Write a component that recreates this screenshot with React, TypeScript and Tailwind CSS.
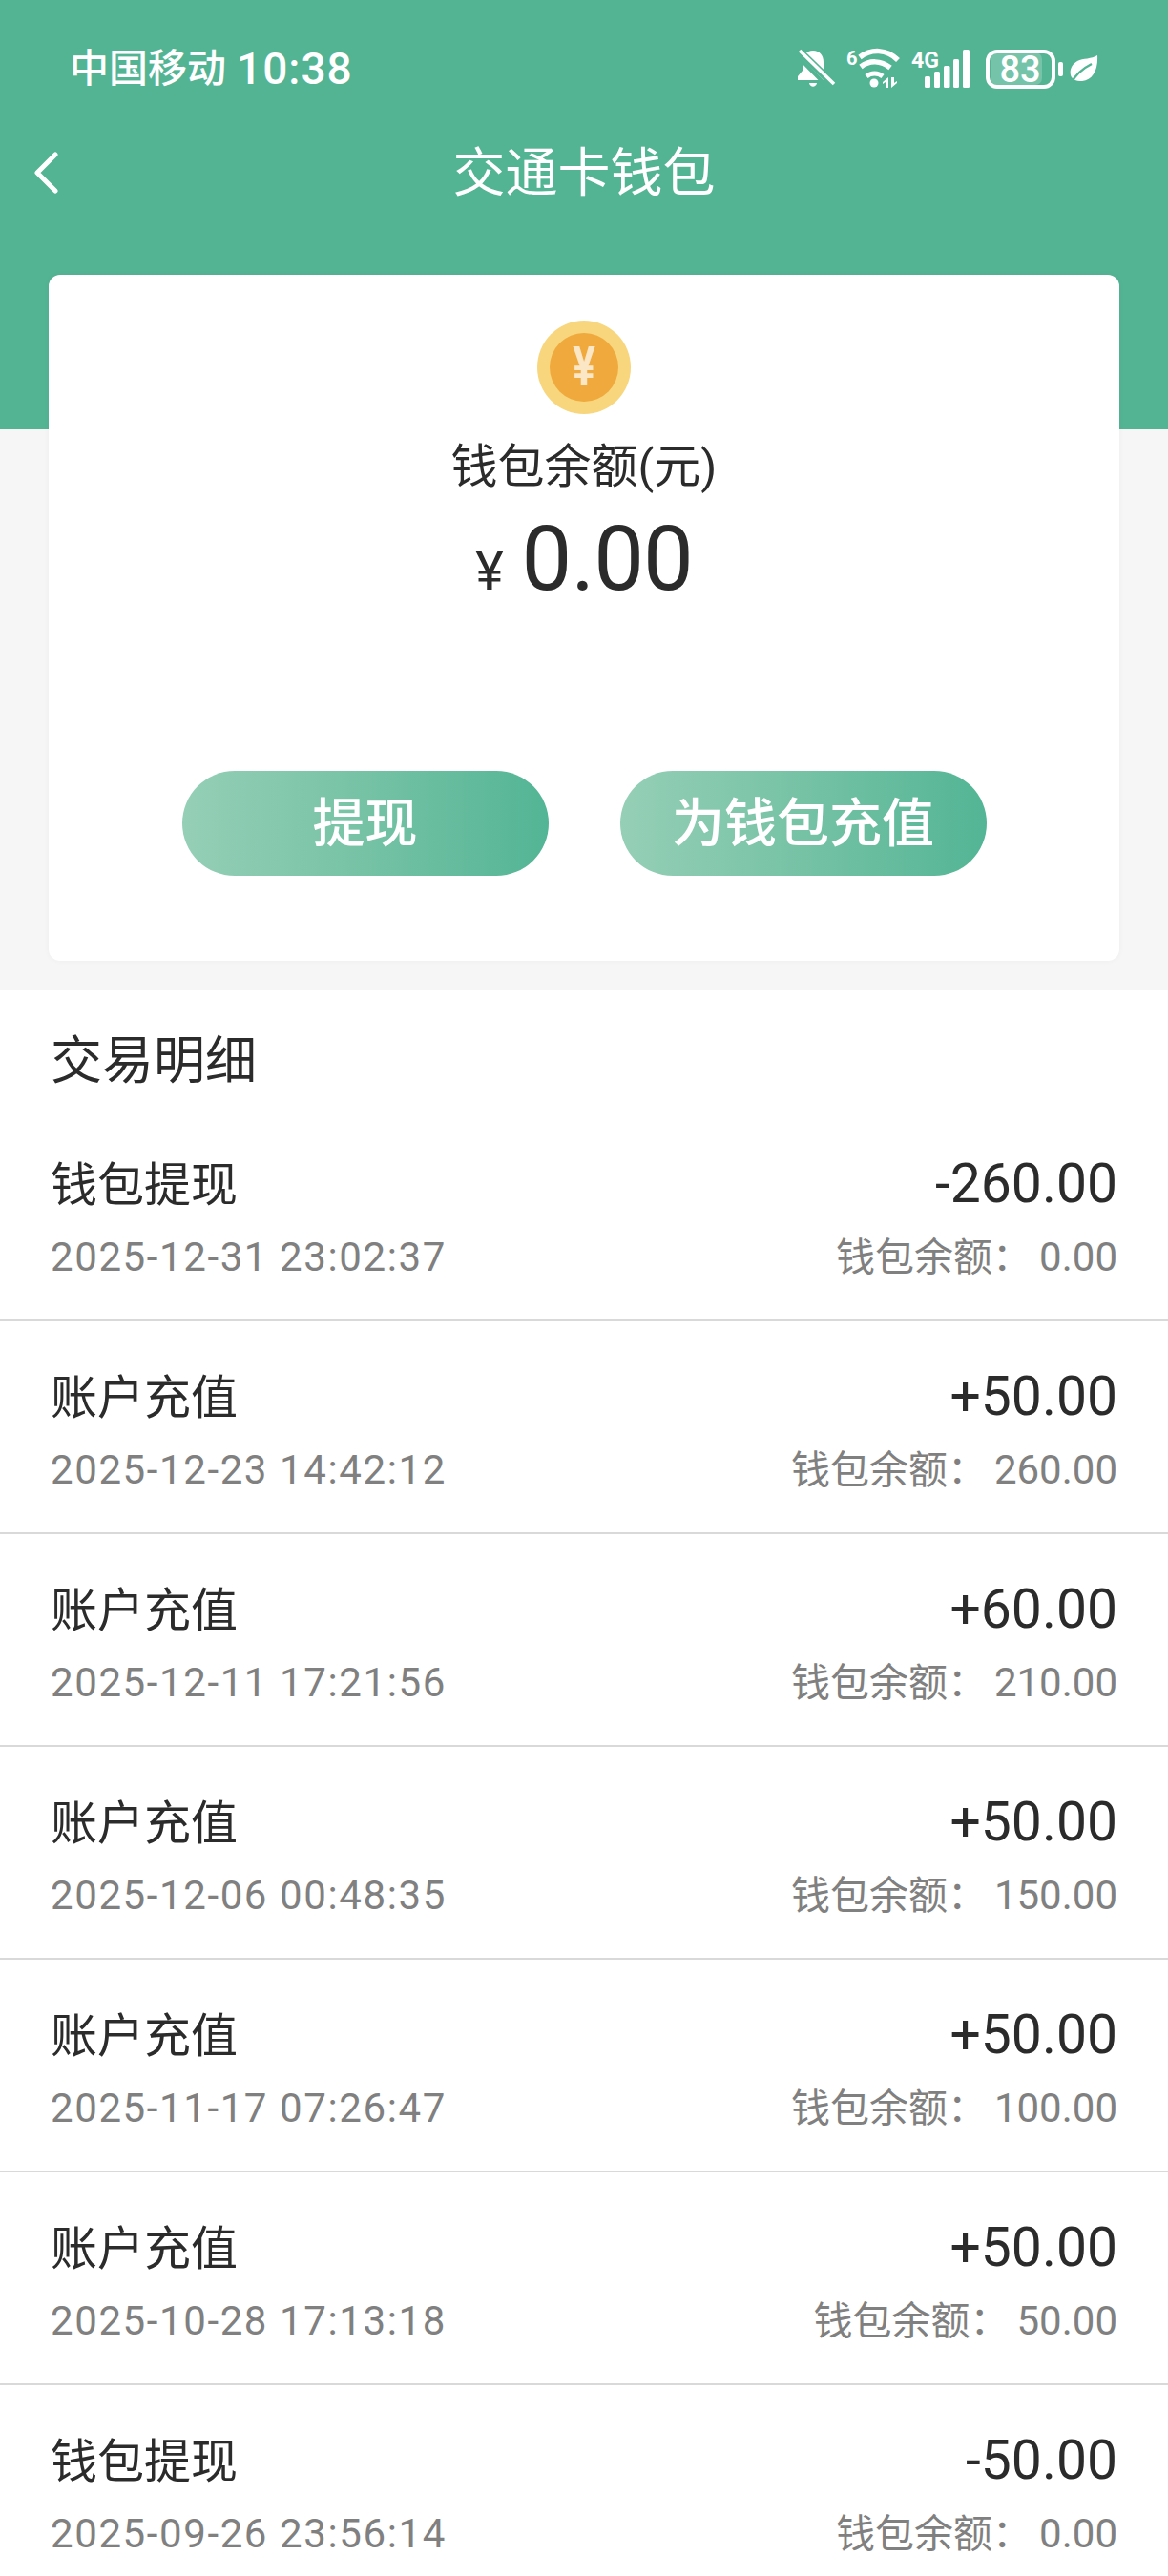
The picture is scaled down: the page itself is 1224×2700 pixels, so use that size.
const FONT = "font-['Roboto','Noto_Sans_CJK_SC',sans-serif]";

const rows = [
  { t: "钱包提现", d: "2025-12-31 23:02:37", a: "-260.00", b: "0.00" },
  { t: "账户充值", d: "2025-12-23 14:42:12", a: "+50.00", b: "260.00" },
  { t: "账户充值", d: "2025-12-11 17:21:56", a: "+60.00", b: "210.00" },
  { t: "账户充值", d: "2025-12-06 00:48:35", a: "+50.00", b: "150.00" },
  { t: "账户充值", d: "2025-11-17 07:26:47", a: "+50.00", b: "100.00" },
  { t: "账户充值", d: "2025-10-28 17:13:18", a: "+50.00", b: "50.00" },
  { t: "钱包提现", d: "2025-09-26 23:56:14", a: "-50.00", b: "0.00" },
];

function StatusIcons() {
  return (
    <div className="flex items-center">
      <svg width="40" height="44" viewBox="0 0 40 44" fill="none">
        <path d="M16 3c-7 0-11 5-11 12v9l-5 6v4h32v-4l-5-6v-9c0-7-4-12-11-12z" fill="#fff" />
        <path d="M12 37h8c-1 5-7 5-8 0z" fill="#fff" />
        <path d="M-3 6 33 43" stroke="#53b494" strokeWidth="4" />
        <path d="M1 3 38 39" stroke="#53b494" strokeWidth="8" />
        <path d="M2 3 38 38" stroke="#fff" strokeWidth="3.500" />
      </svg>
      <svg className="ml-[11px]" width="56" height="44" viewBox="0 0 56 44" fill="none">
        <text x="0" y="18" fontSize="20" fontWeight="700" fill="#fff" fontFamily="Roboto">6</text>
        <path d="M14 10C26 1 42 1 54 13" stroke="#fff" strokeWidth="5.500" />
        <path d="M15 20c9-7 21-7 31 1" stroke="#fff" strokeWidth="5.500" />
        <path d="M21 30c5-4 12-4 17 0" stroke="#fff" strokeWidth="5" />
        <circle cx="29" cy="37" r="4.500" fill="#fff" />
        <path d="M44 31v11h-3v-6l-3 2v-2zM47 42V31h3v6l3-2v2z" fill="#fff" />
      </svg>
      <svg className="ml-[12px]" width="62" height="44" viewBox="0 0 62 44" fill="none">
        <text x="0" y="21" fontSize="24" fontWeight="700" fill="#fff" fontFamily="Roboto" textLength="29" lengthAdjust="spacingAndGlyphs">4G</text>
        <rect x="14" y="30" width="6" height="12" rx="1.500" fill="#fff" />
        <rect x="24" y="25" width="6" height="17" rx="1.500" fill="#fff" />
        <rect x="34" y="19" width="6.500" height="23" rx="1.500" fill="#fff" />
        <rect x="44" y="12" width="6" height="30" rx="1.500" fill="#fff" />
        <rect x="54" y="2" width="7" height="40" rx="1.500" fill="#fff" />
      </svg>
      <svg className="ml-[16px]" width="82" height="44" viewBox="0 0 82 44" fill="none">
        <rect x="5" y="5" width="54" height="34" rx="7" fill="#fff" fillOpacity="0.2" />
        <rect x="2" y="4" width="69" height="37" rx="10" stroke="#fff" strokeWidth="4" />
        <text x="36" y="36" textAnchor="middle" fontSize="38" fontWeight="500" fill="#fff" fontFamily="Roboto">83</text>
        <rect x="76" y="15" width="5" height="15" rx="2" fill="#fff" />
      </svg>
      <svg className="ml-[6px]" width="30" height="44" viewBox="0 0 30 44" fill="none">
        <path d="M29 8c1 15-5 26-16 27-5 .5-9-1-11-4C-1 26 1 18 8 14c6-3 15-2 21-6z" fill="#fff" />
        <path d="M1 38C6 28 13 22 23 17" stroke="#53b494" strokeWidth="2.500" />
      </svg>
    </div>
  );
}

function Row({ t, d, a, b }: { t: string; d: string; a: string; b: string }) {
  return (
    <div className="flex justify-between h-[223px] px-[53px] pt-[49px] border-b-2 border-[#d9d9d9] last:border-b-0">
      <div className="flex flex-col">
        <div className="text-[49px] leading-[64px] text-[#2b2b2b]">{t}</div>
        <div className="mt-[15px] text-[42px] leading-[56px] tracking-[1.6px] text-[#808080]">{d}</div>
      </div>
      <div className="flex flex-col items-end -mt-[2px]">
        <div className="text-[57px] leading-[64px] text-[#2b2b2b]">{a}</div>
        <div className="mt-[17px] text-[41px] leading-[56px] text-[#808080]">
          钱包余额：<span className="ml-[8px] text-[42px]">{b}</span>
        </div>
      </div>
    </div>
  );
}

export default function App() {
  return (
    <div className={`${FONT} w-[1224px] h-[2700px] overflow-hidden bg-white`}>
      <header className="h-[450px] bg-[#53b494] text-white">
        <div className="flex items-center justify-between pt-[48px] pl-[73px] pr-[73px] h-[96px]">
          <div className="flex items-center gap-[11px] text-[46px] leading-[48px] font-medium">
            <span className="text-[41px]">中国移动</span>
            <span className="tracking-[1px]">10:38</span>
          </div>
          <StatusIcons />
        </div>
        <div className="grid grid-cols-[1fr_auto_1fr] items-center pt-[49px] pl-[36px]">
          <svg width="26" height="44" viewBox="0 0 26 44" fill="none">
            <path d="M22 3 3 22l19 19" stroke="#fff" strokeWidth="5" strokeLinecap="round" strokeLinejoin="round" />
          </svg>
          <div className="text-[55px] leading-[72px] -translate-x-[18px]">交通卡钱包</div>
          <div />
        </div>
      </header>

      <main className="flex flex-col bg-[#f6f6f6] pb-[31px]">
        <section className="relative -mt-[162px] mx-[51px] h-[719px] rounded-[12px] bg-white flex flex-col items-center pt-[48px] shadow-[0_0_6px_rgba(0,0,0,0.04)]">
          <div className="size-[98px] rounded-full bg-[#f8d67d] flex items-center justify-center">
            <div className="size-[72px] rounded-full bg-[#f0a93c] flex items-center justify-center text-[44px] font-bold text-[#fbe6c6] leading-none">
              <span className="scale-y-[1.3]">¥</span>
            </div>
          </div>
          <div className="mt-[24px] text-[49px] leading-[64px] text-[#2b2b2b]">钱包余额(元)</div>
          <div className="flex items-baseline text-[#2b2b2b] leading-[100px] mt-[14px]">
            <span className="text-[56px] mr-[19px]">¥</span>
            <span className="text-[94px] tracking-[-1px]">0.00</span>
          </div>
          <div className="mt-[159px] flex gap-[75px]">
            <button className="w-[384px] h-[110px] rounded-full bg-gradient-to-r from-[#95cfb6] to-[#52b595] text-white text-[55px] font-medium">提现</button>
            <button className="w-[384px] h-[110px] rounded-full bg-gradient-to-r from-[#95cfb6] to-[#52b595] text-white text-[55px] font-medium">为钱包充值</button>
          </div>
        </section>
      </main>

      <section>
        <div className="h-[124px] pl-[53px] pt-[39px] text-[54px] leading-[72px] text-[#2b2b2b]">交易明细</div>
        {rows.map((r) => (
          <Row key={r.d} {...r} />
        ))}
      </section>
    </div>
  );
}
